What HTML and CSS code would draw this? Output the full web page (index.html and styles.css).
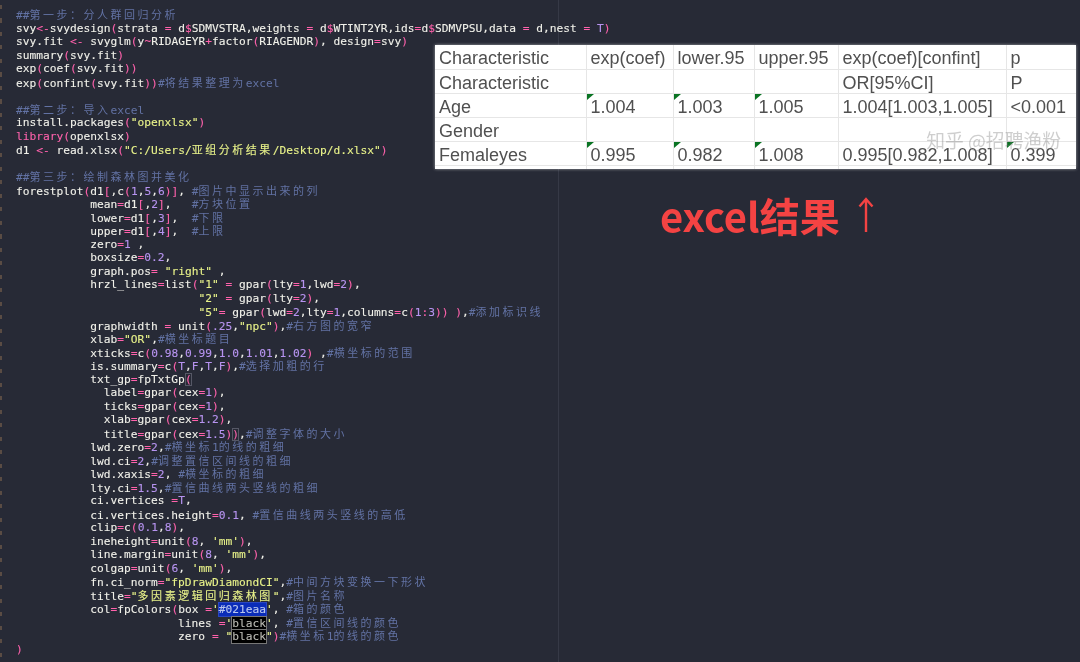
FILE: index.html
```html
<!DOCTYPE html>
<html lang="zh">
<head>
<meta charset="utf-8">
<title>forestplot</title>
<link rel="stylesheet" href="styles.css">
</head>
<body>
<div class="editor">
  <div class="gutter"></div>
  <div class="code">
    <div class="l"><span class="c">##<span class="z">第一步：分人群回归分析</span></span></div>
    <div class="l">svy<span class="o">&lt;-</span>svydesign<span class="o">(</span>strata <span class="o">=</span> d<span class="o">$</span>SDMVSTRA,weights <span class="o">=</span> d<span class="o">$</span>WTINT2YR,ids<span class="o">=</span>d<span class="o">$</span>SDMVPSU,data <span class="o">=</span> d,nest <span class="o">=</span> <span class="n">T</span><span class="o">)</span></div>
    <div class="l">svy.fit <span class="o">&lt;-</span> svyglm<span class="o">(</span>y<span class="o">~</span>RIDAGEYR<span class="o">+</span>factor<span class="o">(</span>RIAGENDR<span class="o">)</span>, design<span class="o">=</span>svy<span class="o">)</span></div>
    <div class="l">summary<span class="o">(</span>svy.fit<span class="o">)</span></div>
    <div class="l">exp<span class="o">(</span>coef<span class="o">(</span>svy.fit<span class="o">))</span></div>
    <div class="l">exp<span class="o">(</span>confint<span class="o">(</span>svy.fit<span class="o">))</span><span class="c">#<span class="z">将结果整理为</span>excel</span></div>
    <div class="l"></div>
    <div class="l"><span class="c">##<span class="z">第二步：导入</span>excel</span></div>
    <div class="l">install.packages<span class="o">(</span><span class="s">"openxlsx"</span><span class="o">)</span></div>
    <div class="l"><span class="o">library(</span>openxlsx<span class="o">)</span></div>
    <div class="l">d1 <span class="o">&lt;-</span> read.xlsx<span class="o">(</span><span class="s">"C:/Users/<span class="z">亚组分析结果</span>/Desktop/d.xlsx"</span><span class="o">)</span></div>
    <div class="l"></div>
    <div class="l"><span class="c">##<span class="z">第三步：绘制森林图并美化</span></span></div>
    <div class="l">forestplot<span class="o">(</span>d1<span class="o">[</span>,c<span class="o">(</span><span class="n">1</span>,<span class="n">5</span>,<span class="n">6</span><span class="o">)]</span>, <span class="c">#<span class="z">图片中显示出来的列</span></span></div>
    <div class="l">           mean<span class="o">=</span>d1<span class="o">[</span>,<span class="n">2</span><span class="o">]</span>,   <span class="c">#<span class="z">方块位置</span></span></div>
    <div class="l">           lower<span class="o">=</span>d1<span class="o">[</span>,<span class="n">3</span><span class="o">]</span>,  <span class="c">#<span class="z">下限</span></span></div>
    <div class="l">           upper<span class="o">=</span>d1<span class="o">[</span>,<span class="n">4</span><span class="o">]</span>,  <span class="c">#<span class="z">上限</span></span></div>
    <div class="l">           zero<span class="o">=</span><span class="n">1</span> ,</div>
    <div class="l">           boxsize<span class="o">=</span><span class="n">0.2</span>,</div>
    <div class="l">           graph.pos<span class="o">=</span> <span class="s">"right"</span> ,</div>
    <div class="l">           hrzl_lines<span class="o">=</span>list<span class="o">(</span><span class="s">"1"</span> <span class="o">=</span> gpar<span class="o">(</span>lty<span class="o">=</span><span class="n">1</span>,lwd<span class="o">=</span><span class="n">2</span><span class="o">)</span>,</div>
    <div class="l">                           <span class="s">"2"</span> <span class="o">=</span> gpar<span class="o">(</span>lty<span class="o">=</span><span class="n">2</span><span class="o">)</span>,</div>
    <div class="l">                           <span class="s">"5"</span><span class="o">=</span> gpar<span class="o">(</span>lwd<span class="o">=</span><span class="n">2</span>,lty<span class="o">=</span><span class="n">1</span>,columns<span class="o">=</span>c<span class="o">(</span><span class="n">1</span><span class="o">:</span><span class="n">3</span><span class="o">))</span> <span class="o">)</span>,<span class="c">#<span class="z">添加标识线</span></span></div>
    <div class="l">           graphwidth <span class="o">=</span> unit<span class="o">(</span><span class="n">.25</span>,<span class="s">"npc"</span><span class="o">)</span>,<span class="c">#<span class="z">右方图的宽窄</span></span></div>
    <div class="l">           xlab<span class="o">=</span><span class="s">"OR"</span>,<span class="c">#<span class="z">横坐标题目</span></span></div>
    <div class="l">           xticks<span class="o">=</span>c<span class="o">(</span><span class="n">0.98</span>,<span class="n">0.99</span>,<span class="n">1.0</span>,<span class="n">1.01</span>,<span class="n">1.02</span><span class="o">)</span> ,<span class="c">#<span class="z">横坐标的范围</span></span></div>
    <div class="l">           is.summary<span class="o">=</span>c<span class="o">(</span><span class="n">T</span>,<span class="n">F</span>,<span class="n">T</span>,<span class="n">F</span><span class="o">)</span>,<span class="c">#<span class="z">选择加粗的行</span></span></div>
    <div class="l">           txt_gp<span class="o">=</span>fpTxtGp<span class="o match">(</span></div>
    <div class="l">             label<span class="o">=</span>gpar<span class="o">(</span>cex<span class="o">=</span><span class="n">1</span><span class="o">)</span>,</div>
    <div class="l">             ticks<span class="o">=</span>gpar<span class="o">(</span>cex<span class="o">=</span><span class="n">1</span><span class="o">)</span>,</div>
    <div class="l">             xlab<span class="o">=</span>gpar<span class="o">(</span>cex<span class="o">=</span><span class="n">1.2</span><span class="o">)</span>,</div>
    <div class="l">             title<span class="o">=</span>gpar<span class="o">(</span>cex<span class="o">=</span><span class="n">1.5</span><span class="o">)</span><span class="o match">)</span>,<span class="c">#<span class="z">调整字体的大小</span></span></div>
    <div class="l">           lwd.zero<span class="o">=</span><span class="n">2</span>,<span class="c">#<span class="z">横坐标</span>1<span class="z">的线的粗细</span></span></div>
    <div class="l">           lwd.ci<span class="o">=</span><span class="n">2</span>,<span class="c">#<span class="z">调整置信区间线的粗细</span></span></div>
    <div class="l">           lwd.xaxis<span class="o">=</span><span class="n">2</span>, <span class="c">#<span class="z">横坐标的粗细</span></span></div>
    <div class="l">           lty.ci<span class="o">=</span><span class="n">1.5</span>,<span class="c">#<span class="z">置信曲线两头竖线的粗细</span></span></div>
    <div class="l">           ci.vertices <span class="o">=</span><span class="n">T</span>,</div>
    <div class="l">           ci.vertices.height<span class="o">=</span><span class="n">0.1</span>, <span class="c">#<span class="z">置信曲线两头竖线的高低</span></span></div>
    <div class="l">           clip<span class="o">=</span>c<span class="o">(</span><span class="n">0.1</span>,<span class="n">8</span><span class="o">)</span>,</div>
    <div class="l">           ineheight<span class="o">=</span>unit<span class="o">(</span><span class="n">8</span>, <span class="s">'mm'</span><span class="o">)</span>,</div>
    <div class="l">           line.margin<span class="o">=</span>unit<span class="o">(</span><span class="n">8</span>, <span class="s">'mm'</span><span class="o">)</span>,</div>
    <div class="l">           colgap<span class="o">=</span>unit<span class="o">(</span><span class="n">6</span>, <span class="s">'mm'</span><span class="o">)</span>,</div>
    <div class="l">           fn.ci_norm<span class="o">=</span><span class="s">"fpDrawDiamondCI"</span>,<span class="c">#<span class="z">中间方块变换一下形状</span></span></div>
    <div class="l">           title<span class="o">=</span><span class="s">"<span class="z">多因素逻辑回归森林图</span>"</span>,<span class="c">#<span class="z">图片名称</span></span></div>
    <div class="l">           col<span class="o">=</span>fpColors<span class="o">(</span>box <span class="o">=</span><span class="s">'<span class="blue">#021eaa</span>'</span>, <span class="c">#<span class="z">箱的颜色</span></span></div>
    <div class="l">                        lines <span class="o">=</span><span class="s">'<span class="black">black</span>'</span>, <span class="c">#<span class="z">置信区间线的颜色</span></span></div>
    <div class="l">                        zero <span class="o">=</span> <span class="s">"<span class="black">black</span>"</span><span class="o">)</span><span class="c">#<span class="z">横坐标</span>1<span class="z">的线的颜色</span></span></div>
    <div class="l"><span class="o">)</span></div>
  </div>
  <div class="side"></div>
</div>

<div class="sheet">
  <table class="grid">
    <colgroup>
      <col class="c1"><col class="c2"><col class="c3"><col class="c4"><col class="c5"><col class="c6">
    </colgroup>
    <tr><td>Characteristic</td><td>exp(coef)</td><td>lower.95</td><td>upper.95</td><td>exp(coef)[confint]</td><td>p</td></tr>
    <tr><td>Characteristic</td><td></td><td></td><td></td><td>OR[95%CI]</td><td>P</td></tr>
    <tr><td>Age</td><td class="flag">1.004</td><td class="flag">1.003</td><td class="flag">1.005</td><td>1.004[1.003,1.005]</td><td>&lt;0.001</td></tr>
    <tr><td>Gender</td><td></td><td></td><td></td><td></td><td></td></tr>
    <tr><td>Femaleyes</td><td class="flag">0.995</td><td class="flag">0.982</td><td class="flag">1.008</td><td>0.995[0.982,1.008]</td><td class="flag">0.399</td></tr>
    <tr class="tail"><td></td><td></td><td></td><td></td><td></td><td></td></tr>
  </table>
  <div class="mark">知乎 @招聘渔粉</div>
</div>

<div class="caption">excel结果<svg class="arrow" viewBox="0 0 16 36" width="16" height="36" aria-hidden="true"><path d="M8 35V2M1.5 9.5 8 2l6.5 7.5" fill="none" stroke="#f44343" stroke-width="2.4"/></svg></div>
</body>
</html>
```
FILE: styles.css
```css
* { box-sizing: border-box; }
html, body { margin: 0; padding: 0; }
body {
  width: 1080px;
  height: 662px;
  overflow: hidden;
  background: #272a36;
  position: relative;
}
.editor { display: flex; height: 662px; }
.gutter {
  width: 2px;
  flex: none;
  background: repeating-linear-gradient(to bottom, #272a36 0, #272a36 5px, #5a4c44 5px, #5a4c44 9px, #272a36 9px, #272a36 13.5px);
}
.code {
  width: 557px;
  flex: none;
  padding: 8px 0 0 14px;
  border-right: 1px solid #363946;
  color: #f1f1ea;
  font-family: "DejaVu Sans Mono", monospace;
  font-size: 11.23px;
  -webkit-text-stroke: 0.1px currentColor;
  filter: blur(0.3px);
}
.side { flex: 1; }
.l { height: 13.5px; line-height: 13.5px; white-space: pre; }
.o { color: #ff62ac; }
.n { color: #b794f0; }
.s { color: #e9f38a; }
.c { color: #6272a4; -webkit-text-stroke: 0; }
.z {
  font-family: "Noto Sans CJK SC", sans-serif;
  font-size: 11px;
  letter-spacing: 2.51px;
}
.match { box-shadow: inset 0 0 0 1px #565866; }
.blue { background: #0a2cb8; color: #b9c6ee; box-shadow: 0 0 0 1px #2a46c0; }
.black { background: #000; color: #bdbdb6; box-shadow: 0 0 0 1px #777; }

.sheet {
  position: absolute;
  left: 435px;
  top: 45px;
  width: 641px;
  height: 124px;
  background: #fff;
  box-shadow: 0 0 3px rgba(255, 255, 255, 0.55);
  overflow: hidden;
}
.grid {
  border-collapse: collapse;
  table-layout: fixed;
  width: 641px;
  font-family: "Liberation Sans", Arial, sans-serif;
  font-size: 18px;
  color: #505050;
  filter: blur(0.4px);
}
.c1 { width: 151px; }
.c2 { width: 87px; }
.c3 { width: 81px; }
.c4 { width: 84px; }
.c5 { width: 168px; }
.c6 { width: 70px; }
.grid td {
  height: 24px;
  padding: 3px 0 0 4px;
  line-height: 20px;
  border: 1px solid #e6e6e6;
  border-top-width: 0;
  position: relative;
  white-space: nowrap;
  overflow: hidden;
}
.grid td:first-child { border-left: 0; }
.grid td:last-child { border-right: 0; }
.grid .tail td { height: 5px; padding: 0; border-bottom: 0; line-height: 0; }
.flag::before {
  content: "";
  position: absolute;
  left: 0;
  top: 0;
  border-style: solid;
  border-width: 6px 7px 0 0;
  border-color: #0a7423 transparent transparent transparent;
}
.mark {
  position: absolute;
  right: 15px;
  top: 83px;
  font-family: "Noto Sans CJK SC", sans-serif;
  font-size: 18.8px;
  line-height: 24px;
  white-space: nowrap;
  color: rgba(120, 120, 120, 0.36);
  filter: blur(0.5px);
}
.caption {
  position: absolute;
  left: 660px;
  top: 190px;
  display: flex;
  align-items: center;
  font-family: "Noto Sans CJK SC", sans-serif;
  font-weight: 700;
  font-size: 40px;
  line-height: 50px;
  color: #f44343;
  white-space: nowrap;
  filter: blur(0.4px);
}
.arrow { margin-left: 18px; flex: none; }
```
